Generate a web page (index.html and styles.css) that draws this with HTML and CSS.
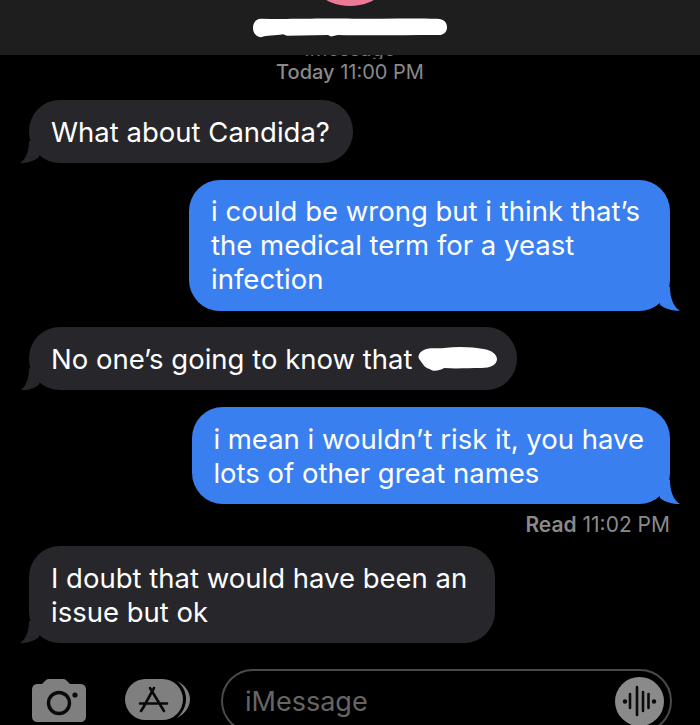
FILE: index.html
```html
<!DOCTYPE html>
<html>
<head>
	<title>Messages</title>
	<link rel="stylesheet" href="styles.css">
</head>
<body>
	<div class="screen">
		<header class="top">
			<div class="avatar"></div>
			<svg class="name-blob" width="194" height="20" viewBox="0 0 194 26" preserveAspectRatio="none">
				<path d="M8 1C40 2 60 0 100 1C130 1 160 0 184 1C191 1 194 6 194 12C194 19 190 23 184 22C150 22 120 23 85 22L78 24L75 22L34 23L30 21C22 23 14 22 8 25C3 25 0 19 0 13C0 6 3 1 8 1Z" fill="#fff"/>
			</svg>
		</header>

		<div class="service"><span>iMessage</span></div>
		<div class="stamp"><b>Today</b> 11:00 PM</div>

		<main class="thread">
			<div class="bubble in">What about Candida?</div>
			<div class="bubble out wrapped">i could be wrong but i think that’s<br>the medical term for a yeast<br>infection</div>
			<div class="bubble in blobbed">No one’s going to know that
				<svg class="inline-blob" width="80" height="26" viewBox="0 0 82 26" preserveAspectRatio="none">
					<path d="M7 4C14 1 20 3 28 2C42 0 58 1 68 3C77 4 82 9 82 13C82 19 75 22 66 22C52 22 40 23 28 22C22 25 16 26 13 23C8 22 6 18 3 14C0 11 2 6 7 4Z" fill="#fff"/>
				</svg>
			</div>
			<div class="bubble out tight">i mean i wouldn’t risk it, you have<br>lots of other great names</div>
		</main>

		<div class="receipt"><b>Read</b> 11:02 PM</div>

		<div class="bubble in last">I doubt that would have been an<br>issue but ok</div>

		<footer class="composer">
			<svg class="camera" width="54" height="43" viewBox="0 0 54 43">
				<path fill="#7f7f7f" d="M6 5H10L14 1C15 0 16 0 17 0H31C32 0 33 0 34 1L38 5H48C52 5 54 7 54 11V37C54 41 52 43 48 43H6C2 43 0 41 0 37V11C0 7 2 5 6 5Z"/>
				<circle cx="27" cy="24" r="10.5" fill="none" stroke="#0a0a0a" stroke-width="3.4"/>
				<circle cx="43" cy="16" r="2.6" fill="#0a0a0a"/>
			</svg>
			<svg class="apps" width="66" height="42" viewBox="0 0 66 42">
				<path d="M52 2C60 6 65 13 65 20C65 28 60 35 52 39C58 33 61 27 61 20C61 13 58 7 52 2Z" fill="#7f7f7f"/>
				<rect x="0" y="0" width="58" height="41" rx="20.5" fill="#7f7f7f"/>
				<path d="M29 9L18 29M25 9L39 32M15 24.5H42M16 32L18 29" fill="none" stroke="#0a0a0a" stroke-width="2.6" stroke-linecap="round"/>
			</svg>
			<div class="field">
				<span class="placeholder">iMessage</span>
				<svg class="voice" width="49" height="49" viewBox="0 0 49 49">
					<circle cx="24.5" cy="24.5" r="24.5" fill="#8a8a8a"/>
					<path d="M15 17V31M22 10V38M28 15V34M33.5 17V31" fill="none" stroke="#0a0a0a" stroke-width="2.6" stroke-linecap="round"/>
					<path d="M10 24.5V24.5M39 24.5V24.5" fill="none" stroke="#0a0a0a" stroke-width="4.5" stroke-linecap="round"/>
				</svg>
			</div>
		</footer>
	</div>
</body>
</html>
```

FILE: styles.css
```css
html, body{
	margin: 0;
	background: #000;
}
.screen{
	height: 725px;
	overflow: hidden;
	display: flex;
	flex-direction: column;
	font-family: Inter, "Liberation Sans", sans-serif;
	color: #fff;
}
.screen > *{
	flex-shrink: 0;
}

/* header */
.top{
	height: 55px;
	background: #1e1e1f;
	overflow: hidden;
	display: flex;
	flex-direction: column;
	align-items: center;
}
.avatar{
	width: 100px;
	height: 100px;
	flex-shrink: 0;
	margin-top: -94px;
	border-radius: 50%;
	background: #ec7a96;
}
.name-blob{
	margin-top: 12px;
	flex-shrink: 0;
}
.service{
	height: 4px;
	overflow: hidden;
	display: flex;
	justify-content: center;
	align-items: flex-end;
	font-size: 20px;
	line-height: 20px;
	color: #777;
}
.stamp{
	margin-top: 1px;
	text-align: center;
	font-size: 20px;
	line-height: 24px;
	color: #8a8a8a;
}
.stamp b{
	font-weight: 500;
}

/* messages */
.thread{
	display: flex;
	flex-direction: column;
	gap: 16.7px;
	margin-top: 16px;
}
.bubble{
	position: relative;
	box-sizing: border-box;
	padding: 14.5px 23px 14.5px 22px;
	border-radius: 31px;
	font-size: 27.5px;
	line-height: 34px;
	white-space: nowrap;
	width: fit-content;
}
.bubble.in{
	margin-left: 29px;
	background: #27272b;
}
.bubble.out{
	margin-left: auto;
	margin-right: 30px;
	background: #3a7ff0;
}
.bubble.wrapped{
	padding-right: 30px;
}
.bubble.tight{
	padding: 14.5px 26px 14.5px 21px;
}
.bubble.last{
	margin-top: 9px;
	padding-right: 28px;
}
.in::after, .out::after{
	content: "";
	position: absolute;
	bottom: 0;
	width: 24px;
	height: 24px;
}
.in::after{
	left: -9px;
	background: #27272b;
	clip-path: path("M9 2C9 12 6 20 0 24C8 24 14 22 19 18L24 0Z");
}
.out::after{
	right: -10px;
	background: #3a7ff0;
	clip-path: path("M14 0C14 10 17 20 24 24C16 24 9 22 4 18L0 0Z");
}
.bubble.blobbed{
	padding-right: 20px;
	display: flex;
	align-items: center;
}
.inline-blob{
	margin-left: 5px;
	flex-shrink: 0;
}
.receipt{
	margin-top: 9px;
	padding-right: 30px;
	text-align: right;
	font-size: 21px;
	line-height: 24px;
	color: #8a8a8a;
}
.receipt b{
	font-weight: 600;
}

/* bottom bar */
.composer{
	display: flex;
	align-items: flex-start;
	margin-top: 26px;
	padding-left: 32px;
}
.camera{
	margin-top: 10px;
	flex-shrink: 0;
}
.apps{
	margin-top: 10px;
	margin-left: 39px;
	flex-shrink: 0;
}
.field{
	box-sizing: border-box;
	width: 451px;
	height: 64px;
	margin-left: 30px;
	padding: 0 6px 0 22px;
	border: 2px solid #4a4a4a;
	border-radius: 32px;
	display: flex;
	align-items: center;
	justify-content: space-between;
}
.placeholder{
	font-size: 27px;
	color: #666;
}
```
